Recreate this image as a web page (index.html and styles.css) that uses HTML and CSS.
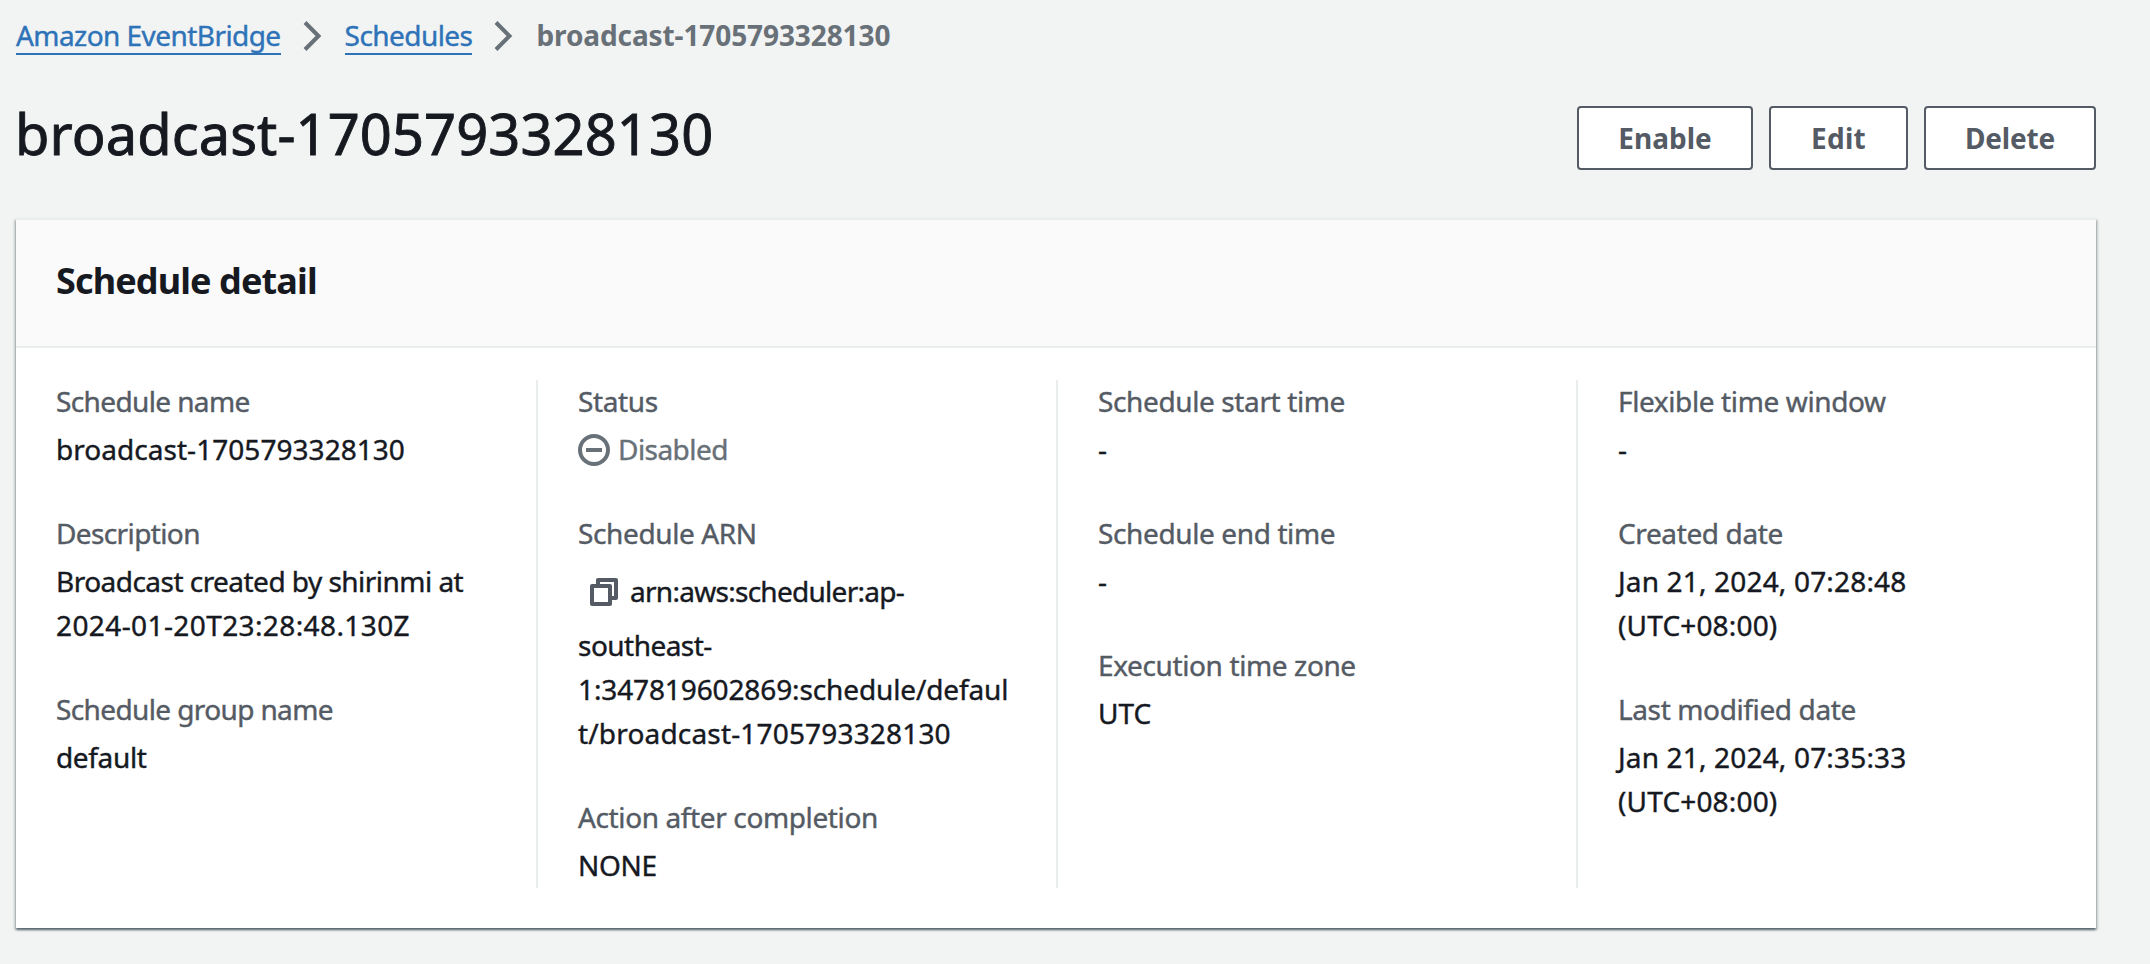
FILE: index.html
```
<!DOCTYPE html>
<html lang="en">
<head>
<meta charset="utf-8">
<title>broadcast-1705793328130</title>
<link rel="stylesheet" href="styles.css">
</head>
<body>
<main class="page">
  <nav class="breadcrumbs">
    <a class="crumb" href="#">Amazon EventBridge</a>
    <svg class="chevron" viewBox="0 0 20 32"><path d="M2 2.5 15.5 16 2 29.5"/></svg>
    <a class="crumb" href="#">Schedules</a>
    <svg class="chevron" viewBox="0 0 20 32"><path d="M2 2.5 15.5 16 2 29.5"/></svg>
    <span class="crumb-current">broadcast-1705793328130</span>
  </nav>

  <header class="page-header">
    <h1 class="title">broadcast-1705793328130</h1>
    <div class="actions">
      <button class="button enable">Enable</button>
      <button class="button edit">Edit</button>
      <button class="button delete">Delete</button>
    </div>
  </header>

  <section class="card">
    <div class="card-header"><h2 class="card-title">Schedule detail</h2></div>
    <div class="card-body">
      <dl class="column">
        <div class="field">
          <dt class="label tight">Schedule name</dt>
          <dd class="value name">broadcast-1705793328130</dd>
        </div>
        <div class="field">
          <dt class="label tight">Description</dt>
          <dd class="value"><span class="prose">Broadcast created by shirinmi at</span><br><span class="stamp">2024-01-20T23:28:48.130Z</span></dd>
        </div>
        <div class="field">
          <dt class="label tight">Schedule group name</dt>
          <dd class="value word">default</dd>
        </div>
      </dl>

      <dl class="column">
        <div class="field">
          <dt class="label">Status</dt>
          <dd class="value status">
            <svg class="icon" viewBox="0 0 32 32"><circle cx="16" cy="16" r="14"/><path d="M8 16h16"/></svg>
            <span>Disabled</span>
          </dd>
        </div>
        <div class="field">
          <dt class="label">Schedule ARN</dt>
          <dd class="value">
            <div class="arn-first">
              <svg class="icon copy" viewBox="0 0 32 32"><path d="M4 10h18v18H4z M10 10V4h18v18h-6"/></svg>
              <span class="arn-start">arn:aws:scheduler:ap-</span>
            </div>
            <span class="prose">southeast-</span><br><span class="account">1:347819602869:schedule/defaul</span><br><span class="digits">t/broadcast-1705793328130</span>
          </dd>
        </div>
        <div class="field">
          <dt class="label">Action after completion</dt>
          <dd class="value word">NONE</dd>
        </div>
      </dl>

      <dl class="column">
        <div class="field">
          <dt class="label">Schedule start time</dt>
          <dd class="value">-</dd>
        </div>
        <div class="field">
          <dt class="label">Schedule end time</dt>
          <dd class="value">-</dd>
        </div>
        <div class="field">
          <dt class="label">Execution time zone</dt>
          <dd class="value">UTC</dd>
        </div>
      </dl>

      <dl class="column">
        <div class="field">
          <dt class="label">Flexible time window</dt>
          <dd class="value">-</dd>
        </div>
        <div class="field">
          <dt class="label">Created date</dt>
          <dd class="value digits">Jan 21, 2024, 07:28:48<br>(UTC+08:00)</dd>
        </div>
        <div class="field">
          <dt class="label">Last modified date</dt>
          <dd class="value digits">Jan 21, 2024, 07:35:33<br>(UTC+08:00)</dd>
        </div>
      </dl>
    </div>
  </section>
</main>
</body>
</html>
```
FILE: styles.css
```
* {
  box-sizing: border-box;
}

body {
  margin: 0;
  background: #f2f3f3;
  color: #16191f;
  font: 450 28px/44px "Noto Sans", "Open Sans", sans-serif;
  -webkit-text-stroke: 0.4px currentColor;
}

.page {
  width: 2112px;
  height: 964px;
  padding: 13px 16px 0;
}

.breadcrumbs {
  display: flex;
  align-items: flex-start;
  height: 64px;
}

.crumb {
  height: 42px;
  border-bottom: 2px solid #2e73b8;
  color: #2e73b8;
  letter-spacing: -0.56px;
  text-decoration: none;
}

.chevron {
  width: 20px;
  height: 32px;
  margin: 7px 22px 0;
  fill: none;
  stroke: #687078;
  stroke-width: 4;
}

.crumb-current {
  color: #687078;
  font-weight: 700;
  letter-spacing: -0.1px;
  -webkit-text-stroke: 0;
}

.page-header {
  display: flex;
  justify-content: space-between;
  align-items: flex-start;
  height: 141px;
}

.title {
  margin: 20px 0 0 -1px;
  font-size: 56px;
  font-weight: 450;
  line-height: 72px;
  letter-spacing: 0.1px;
  -webkit-text-stroke: 0.9px currentColor;
}

.actions {
  display: flex;
  gap: 16px;
  margin-top: 29px;
}

.button {
  height: 64px;
  padding: 0;
  border: 2px solid #545b64;
  border-radius: 4px;
  background: #fff;
  color: #545b64;
  font: 700 28px/58px "Noto Sans", "Open Sans", sans-serif;
  -webkit-text-stroke: 0;
}

.enable {
  width: 176px;
}

.edit {
  width: 139px;
  letter-spacing: 0.3px;
}

.delete {
  width: 172px;
  letter-spacing: -0.2px;
}

.card {
  height: 710px;
  border-top: 2px solid #eaeded;
  background: #fff;
  box-shadow: 0 2px 2px 0 rgba(0, 28, 36, 0.5), 2px 2px 2px 0 rgba(0, 28, 36, 0.15), -2px 2px 2px 0 rgba(0, 28, 36, 0.15);
}

.card-header {
  height: 128px;
  padding: 38px 40px 0;
  border-bottom: 2px solid #eaeded;
  background: #fafafa;
}

.card-title {
  margin: 0;
  font-size: 36px;
  font-weight: 700;
  line-height: 46px;
  letter-spacing: -0.88px;
  -webkit-text-stroke: 0;
}

.card-body {
  display: grid;
  grid-template-columns: repeat(4, 520px);
  padding-top: 32px;
}

.column {
  display: flex;
  flex-direction: column;
  gap: 40px;
  height: 508px;
  margin: 0;
  padding-left: 40px;
}

.column + .column {
  border-left: 2px solid #eaeded;
}

.field:first-child {
  margin-top: -1px;
}

.label {
  margin-bottom: 4px;
  color: #545b64;
  letter-spacing: -0.38px;
}

.tight {
  letter-spacing: -0.62px;
}

.value {
  margin: 0;
}

.name {
  letter-spacing: 0.04px;
}

.prose {
  letter-spacing: -0.53px;
}

.word {
  letter-spacing: -0.35px;
}

.account {
  letter-spacing: -0.12px;
}

.digits {
  letter-spacing: 0.17px;
}

.stamp {
  letter-spacing: 0.4px;
}

.status {
  display: flex;
  align-items: center;
  gap: 8px;
  color: #687078;
  letter-spacing: -0.55px;
}

.icon {
  width: 32px;
  height: 32px;
  margin-top: 2px;
  fill: none;
  stroke: #687078;
  stroke-width: 4;
}

.arn-first {
  display: flex;
  align-items: center;
  height: 64px;
  padding-left: 10px;
}

.copy {
  stroke: #545b64;
  stroke-linejoin: round;
}

.arn-start {
  margin-left: 10px;
  letter-spacing: -0.72px;
}
```
